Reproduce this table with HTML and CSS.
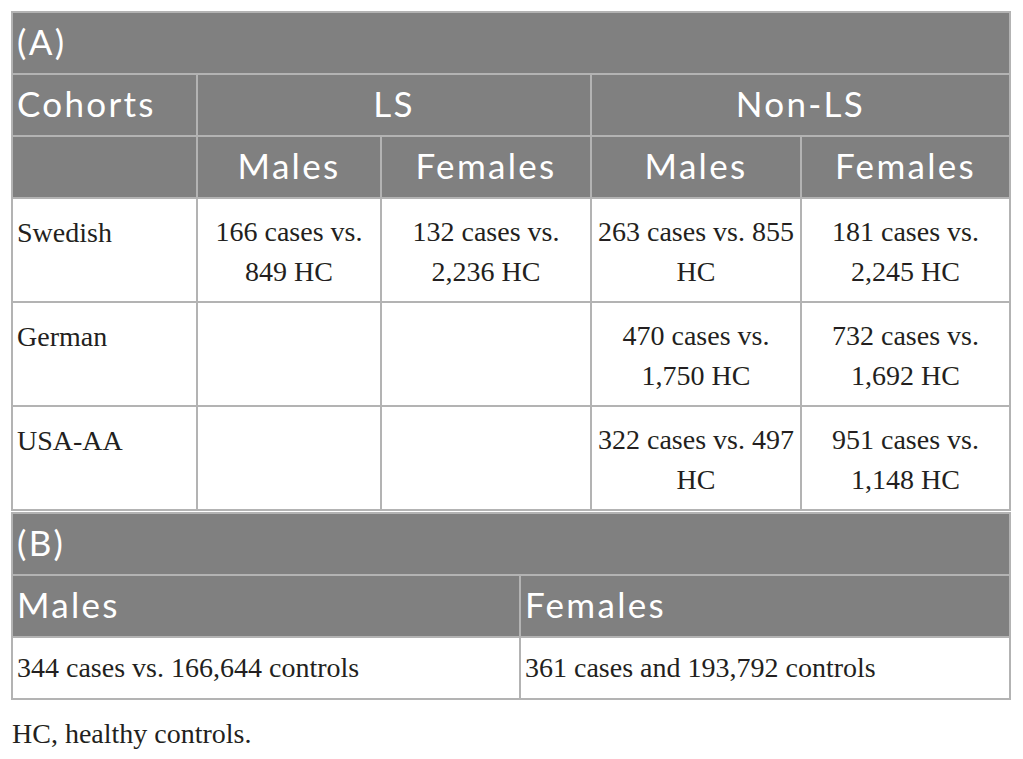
FILE: index.html
```html
<!DOCTYPE html>
<html lang="en">
<head>
	<meta charset="UTF-8">
	<title>Cohorts</title>
	<link rel="stylesheet" href="styles.css">
</head>
<body>
	<div class="page">
		<table class="grid cohorts">
			<colgroup>
				<col class="c1"><col class="c2"><col class="c3"><col class="c4"><col class="c5">
			</colgroup>
			<tr class="title"><th colspan="5">(A)</th></tr>
			<tr class="head">
				<th class="left">Cohorts</th>
				<th colspan="2">LS</th>
				<th colspan="2">Non-LS</th>
			</tr>
			<tr class="head">
				<th></th>
				<th>Males</th>
				<th>Females</th>
				<th>Males</th>
				<th>Females</th>
			</tr>
			<tr>
				<td class="name">Swedish</td>
				<td>166 cases vs.<br>849 HC</td>
				<td>132 cases vs.<br>2,236 HC</td>
				<td>263 cases vs. 855<br>HC</td>
				<td>181 cases vs.<br>2,245 HC</td>
			</tr>
			<tr>
				<td class="name">German</td>
				<td></td>
				<td></td>
				<td>470 cases vs.<br>1,750 HC</td>
				<td>732 cases vs.<br>1,692 HC</td>
			</tr>
			<tr>
				<td class="name">USA-AA</td>
				<td></td>
				<td></td>
				<td>322 cases vs. 497<br>HC</td>
				<td>951 cases vs.<br>1,148 HC</td>
			</tr>
		</table>

		<table class="grid totals">
			<colgroup>
				<col class="half1"><col class="half2">
			</colgroup>
			<tr class="title"><th colspan="2">(B)</th></tr>
			<tr class="head">
				<th class="left">Males</th>
				<th class="left">Females</th>
			</tr>
			<tr>
				<td class="name">344 cases vs. 166,644 controls</td>
				<td class="name">361 cases and 193,792 controls</td>
			</tr>
		</table>

		<p class="note">HC, healthy controls.</p>
	</div>
</body>
</html>
```

FILE: styles.css
```css
/*reset*/
*{
	margin: 0;
	padding: 0;
}
body{
	background-color: #fff;
}
.page{
	padding: 11px;
}

/*tables*/
.grid{
	width: 998px;
	border-collapse: collapse;
	table-layout: fixed;
	font-family: "Liberation Serif", "Times New Roman", serif;
	font-size: 28px;
	color: #231f20;
}
.grid th,
.grid td{
	border: 2px solid #b3b3b3;
}
.grid th{
	height: 55px;
	padding: 0 4px 5px;
	background-color: #808080;
	color: #fff;
	font-family: Lato, "Noto Sans", sans-serif;
	font-weight: normal;
	font-size: 35px;
	letter-spacing: 2.3px;
	text-align: center;
	vertical-align: middle;
}
.grid .title th,
.grid th.left{
	text-align: left;
}
.grid td{
	height: 98px;
	padding: 4px 4px 0;
	line-height: 40px;
	text-align: center;
	vertical-align: middle;
}
.grid td.name{
	height: 88px;
	padding-top: 14px;
	text-align: left;
	vertical-align: top;
}
.c1{ width: 185px; }
.c2{ width: 184px; }
.c3{ width: 210px; }
.c4{ width: 210px; }
.c5{ width: 209px; }

/*part B*/
.totals{
	margin-top: 1px;
}
.half1{ width: 508px; }
.half2{ width: 490px; }
.totals td.name{
	height: 60px;
	padding-top: 0;
	vertical-align: middle;
}

/*note*/
.note{
	margin-top: 18px;
	padding-left: 1px;
	font-family: "Liberation Serif", "Times New Roman", serif;
	font-size: 28px;
	color: #231f20;
}
```
